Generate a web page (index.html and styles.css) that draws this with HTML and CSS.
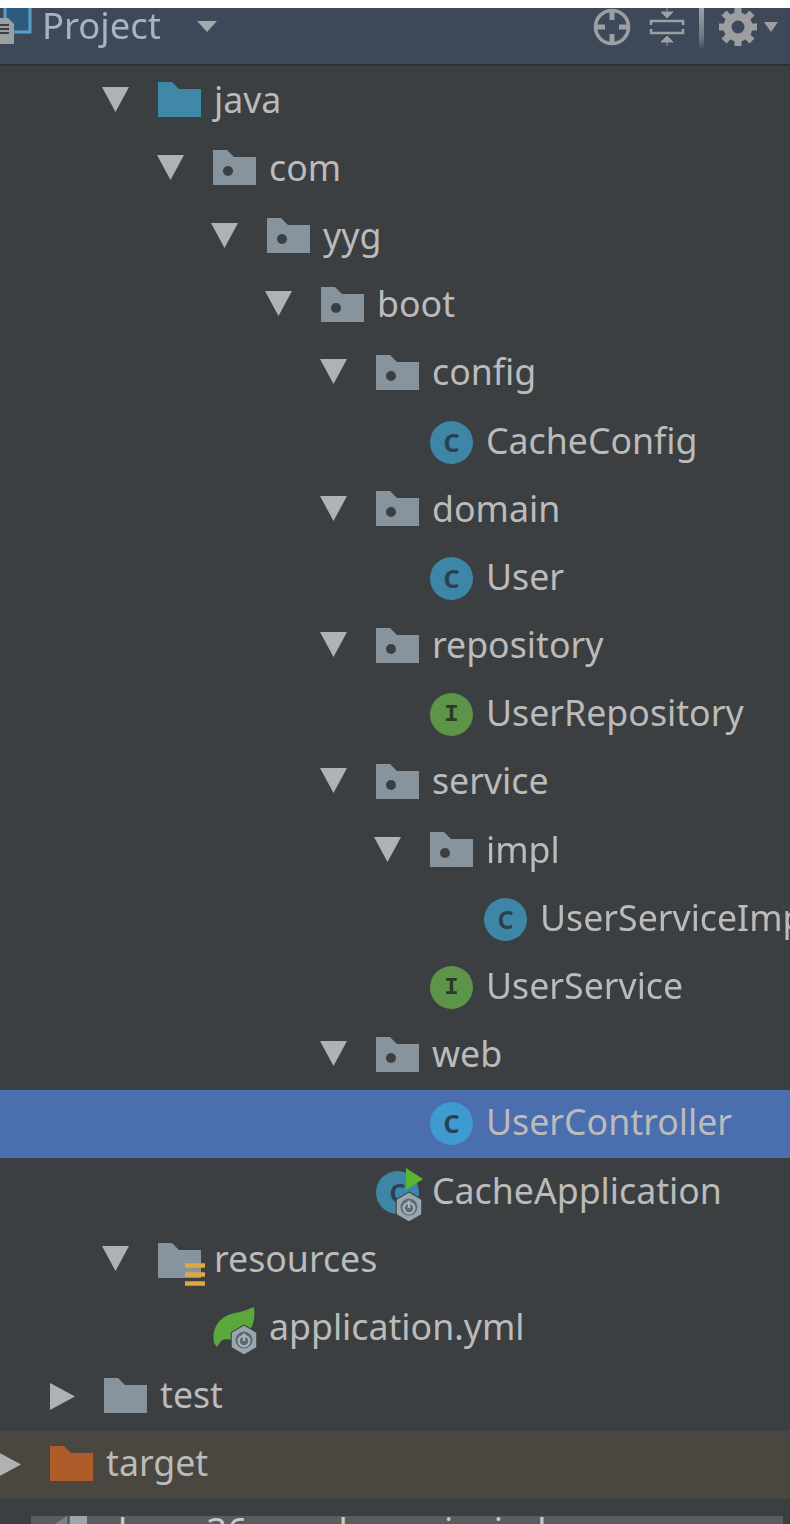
FILE: index.html
```html
<!doctype html>

<html>
<head>
    <meta charset="utf-8">
    <title>Project</title>
    <link rel="stylesheet" href="styles.css">
</head>

<body>
<svg class="defs" width="0" height="0">
    <symbol id="down" viewBox="0 0 27 25"><path d="M0 0H27L13.5 25Z" fill="#afb1b3"/></symbol>
    <symbol id="right" viewBox="0 0 25 27"><path d="M0 0L25 13.5L0 27Z" fill="#afb1b3"/></symbol>
    <symbol id="folder" viewBox="0 0 43 35"><path d="M0 0H14L21 7H43V35H0Z"/></symbol>
    <symbol id="pkg" viewBox="0 0 43 35"><path d="M0 0H14L21 7H43V35H0Z" fill="#87939d"/><circle cx="15" cy="21" r="5" fill="#3c3f41"/></symbol>
    <symbol id="boot" viewBox="0 0 30 30">
        <path d="M15 1L27 8V22L15 29L3 22V8Z" fill="#9aa7b0" stroke="#3c3f41" stroke-width="1"/>
        <circle cx="15" cy="15" r="8" fill="#5e6a72"/>
        <circle cx="15" cy="16" r="5" fill="none" stroke="#a9b4bb" stroke-width="2"/>
        <path d="M15 9V16" stroke="#a9b4bb" stroke-width="2.4"/>
    </symbol>
</svg>

<header class="bar">
    <svg class="view-icon" width="34" height="38" viewBox="0 0 34 38">
        <rect x="5" y="-6" width="25" height="30" fill="#2e5a7c" stroke="#5a9fc9" stroke-width="3"/>
        <path d="M-4 10H8L14 16V36H-4Z" fill="#9b9fa2"/>
        <path d="M0 17H9M0 21H9M0 25H9" stroke="#3c3f41" stroke-width="2"/>
    </svg>
    <span class="bar-title">Project</span>
    <svg class="bar-caret" width="20" height="11" viewBox="0 0 20 11"><path d="M0 0H20L10 11Z" fill="#a3a8ad"/></svg>
    <span class="bar-tools">
        <svg width="38" height="38" viewBox="0 0 38 38">
            <circle cx="19" cy="19" r="16.5" fill="none" stroke="#9c9ea0" stroke-width="3.6"/>
            <path d="M19 3V12M19 26V35M3 19H12M26 19H35" stroke="#9c9ea0" stroke-width="5"/>
        </svg>
        <svg class="tool-collapse" width="36" height="38" viewBox="0 0 36 38">
            <path d="M18 0V5M12 4H24L18 10Z" fill="#9c9ea0" stroke="#9c9ea0"/>
            <path d="M2 17V13H34V17M2 21V25H34V21" fill="none" stroke="#9c9ea0" stroke-width="2.6"/>
            <path d="M18 38V33M12 34H24L18 28Z" fill="#9c9ea0" stroke="#9c9ea0"/>
        </svg>
        <span class="tool-sep"></span>
        <svg width="38" height="38" viewBox="0 0 38 38">
            <path d="M19 6V0M19 38V32M6 19H0M38 19H32M10 10L5 5M28 28L33 33M28 10L33 5M10 28L5 33" stroke="#9c9ea0" stroke-width="7"/>
            <circle cx="19" cy="19" r="10.5" fill="none" stroke="#9c9ea0" stroke-width="8"/>
        </svg>
        <svg class="tool-caret" width="14" height="10" viewBox="0 0 14 10"><path d="M0 0H14L7 10Z" fill="#9c9ea0"/></svg>
    </span>
</header>

<main class="tree">
    <div class="row d2"><svg class="arrow-down"><use href="#down"/></svg><svg class="folder src"><use href="#folder"/></svg><span>java</span></div>
    <div class="row d3"><svg class="arrow-down"><use href="#down"/></svg><svg class="folder"><use href="#pkg"/></svg><span>com</span></div>
    <div class="row d4"><svg class="arrow-down"><use href="#down"/></svg><svg class="folder"><use href="#pkg"/></svg><span>yyg</span></div>
    <div class="row d5"><svg class="arrow-down"><use href="#down"/></svg><svg class="folder"><use href="#pkg"/></svg><span>boot</span></div>
    <div class="row d6"><svg class="arrow-down"><use href="#down"/></svg><svg class="folder"><use href="#pkg"/></svg><span>config</span></div>
    <div class="row d7"><b class="badge badge-c">C</b><span>CacheConfig</span></div>
    <div class="row d6"><svg class="arrow-down"><use href="#down"/></svg><svg class="folder"><use href="#pkg"/></svg><span>domain</span></div>
    <div class="row d7"><b class="badge badge-c">C</b><span>User</span></div>
    <div class="row d6"><svg class="arrow-down"><use href="#down"/></svg><svg class="folder"><use href="#pkg"/></svg><span>repository</span></div>
    <div class="row d7"><b class="badge badge-i">I</b><span>UserRepository</span></div>
    <div class="row d6"><svg class="arrow-down"><use href="#down"/></svg><svg class="folder"><use href="#pkg"/></svg><span>service</span></div>
    <div class="row d7"><svg class="arrow-down"><use href="#down"/></svg><svg class="folder"><use href="#pkg"/></svg><span>impl</span></div>
    <div class="row d8"><b class="badge badge-c">C</b><span>UserServiceImpl</span></div>
    <div class="row d7"><b class="badge badge-i">I</b><span>UserService</span></div>
    <div class="row d6"><svg class="arrow-down"><use href="#down"/></svg><svg class="folder"><use href="#pkg"/></svg><span>web</span></div>
    <div class="row d7 selected"><b class="badge badge-c">C</b><span>UserController</span></div>
    <div class="row d6">
        <div class="run-icon">
            <b class="badge badge-c">C</b>
            <svg class="run-play" width="17" height="22" viewBox="0 0 17 22"><path d="M0 0L17 11L0 22Z" fill="#5cb531"/></svg>
            <svg class="run-boot" width="32" height="32"><use href="#boot"/></svg>
        </div>
        <span>CacheApplication</span>
    </div>
    <div class="row d2"><svg class="arrow-down"><use href="#down"/></svg>
        <div class="res-icon">
            <svg class="folder plain"><use href="#folder"/></svg>
            <svg class="res-lines" width="20" height="24" viewBox="0 0 20 24"><path d="M0 2.5H20M0 11.5H20M0 20.5H20" stroke="#e0a83e" stroke-width="4.4"/></svg>
        </div>
        <span>resources</span>
    </div>
    <div class="row d3">
        <div class="leaf-icon">
            <svg width="36" height="40" viewBox="0 0 36 40"><path d="M1 36C-2 18 10 8 22 6C30 5 36 2 41 0C43 14 38 28 26 32C18 34 12 30 8 34L4 40Z" fill="#5aa83c"/></svg>
            <svg class="leaf-boot" width="32" height="32"><use href="#boot"/></svg>
        </div>
        <span>application.yml</span>
    </div>
    <div class="row d1"><svg class="arrow-right"><use href="#right"/></svg><svg class="folder plain"><use href="#folder"/></svg><span>test</span></div>
    <div class="row d0 excluded"><svg class="arrow-right"><use href="#right"/></svg><svg class="folder build"><use href="#folder"/></svg><span>target</span></div>
</main>

<div class="strip">
    <div class="editor">
        <svg class="editor-icon" width="32" height="8" viewBox="0 0 32 8"><path d="M0 8L12 0V8Z" fill="#7d8183"/><rect x="15" y="0" width="17" height="8" fill="#9aa7b0"/></svg>
        <span class="editor-text">base 36 cnm base ci n issl</span>
    </div>
</div>
</body>
</html>
```

FILE: styles.css
```css
html, body { margin: 0; background: #fff; overflow: hidden; }
body { height: 1524px; padding-top: 8px; box-sizing: border-box; font-family: "Noto Sans", sans-serif; font-size: 35.7px; color: #bbbbbb; }
.defs { position: absolute; }

.bar { height: 56px; background: #3d4958; border-bottom: 2px solid #2f3234; display: flex; align-items: flex-start; position: relative; filter: blur(0.4px); }
.view-icon { flex: none; width: 34px; overflow: hidden; }
.bar-title { margin-left: 8px; line-height: 34px; color: #a9b4c0; font-size: 36.4px; }
.bar-caret { margin-left: 36px; margin-top: 13px; }
.bar-tools { margin-left: auto; display: flex; align-items: flex-start; padding-right: 12px; }
.tool-collapse { margin-left: 18px; }
.tool-sep { width: 5px; height: 42px; margin: 0 15px 0 14px; background: linear-gradient(#9da1a6, #6f767f 70%, #3d4958); }
.tool-caret { margin-top: 14px; margin-left: 7px; }

.tree { background: #3c3f41; padding-top: 1px; height: 1450px; box-sizing: border-box; filter: blur(0.4px); }
.row { height: 68.2px; display: flex; align-items: center; white-space: nowrap; box-sizing: border-box; }
.row > span { margin-left: 13px; margin-top: -5px; }
.d0 { padding-left: 50px; }
.d1 { padding-left: 104px; }
.d2 { padding-left: 158px; }
.d3 { padding-left: 213px; }
.d4 { padding-left: 267px; }
.d5 { padding-left: 321px; }
.d6 { padding-left: 376px; }
.d7 { padding-left: 430px; }
.d8 { padding-left: 484px; }

.selected { background: #4b6eaf; }
.excluded { background: #4a4740; }

.arrow-down { flex: none; width: 27px; height: 25px; margin-left: -56px; margin-right: 29px; margin-top: -4px; }
.arrow-right { flex: none; width: 25px; height: 27px; margin-left: -54px; margin-right: 29px; }
.folder { flex: none; width: 43px; height: 35px; margin-top: -3px; }
.src { fill: #3f88a8; }
.plain { fill: #87939d; }
.build { fill: #b05b2a; }

.badge { flex: none; width: 43px; height: 43px; border-radius: 50%; display: flex; align-items: center; justify-content: center; font-size: 25px; line-height: 1; color: #2a4250; }
.badge-c { background: #3e86a6; }
.badge-i { background: #5c9448; font-family: "Liberation Mono", monospace; font-size: 24px; color: #2c3a28; }
.selected .badge-c { background: #3e9ad0; }

.run-icon, .leaf-icon, .res-icon { flex: none; position: relative; width: 43px; height: 43px; }
.run-play { position: absolute; left: 30px; top: -3px; }
.run-boot { position: absolute; left: 17px; top: 20px; }
.res-icon { height: 35px; }
.res-icon .folder { position: absolute; left: 0; top: 0; margin: 0; }
.res-lines { position: absolute; left: 27px; top: 20px; }
.leaf-icon svg:first-child { position: absolute; left: 0; top: 0; overflow: visible; }
.leaf-boot { position: absolute; left: 15px; top: 17px; }

.strip { background: #3c3f41; height: 8px; padding-left: 31px; }
.editor { position: relative; width: 752px; height: 8px; background: #5a5c5e; overflow: hidden; }
.editor-icon { position: absolute; left: 24px; top: 0; }
.editor-text { position: absolute; left: 87px; top: -10px; white-space: nowrap; color: #c8c8c8; }
```
